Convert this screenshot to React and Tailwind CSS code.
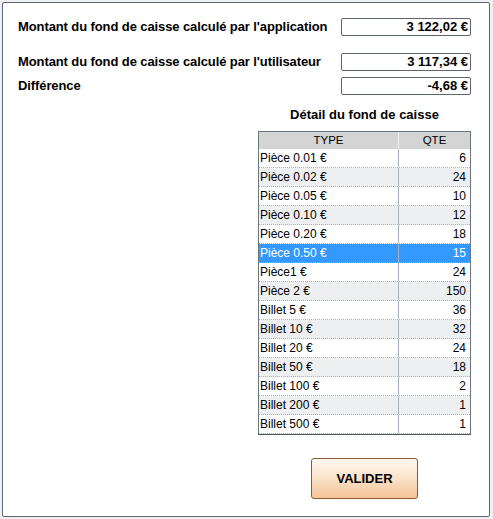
import React from "react";

const rows = [
  ["Pièce 0.01 €", "6"],
  ["Pièce 0.02 €", "24"],
  ["Pièce 0.05 €", "10"],
  ["Pièce 0.10 €", "12"],
  ["Pièce 0.20 €", "18"],
  ["Pièce 0.50 €", "15"],
  ["Pièce1 €", "24"],
  ["Pièce 2 €", "150"],
  ["Billet 5 €", "36"],
  ["Billet 10 €", "32"],
  ["Billet 20 €", "24"],
  ["Billet 50 €", "18"],
  ["Billet 100 €", "2"],
  ["Billet 200 €", "1"],
  ["Billet 500 €", "1"],
];

const SELECTED = 5;

function AmountBox({ value }) {
  return (
    <div className="w-[130px] h-[18px] border border-[#5c6470] rounded-[2px] bg-white flex items-center justify-end pr-[2px] font-bold text-[13px] leading-[16px] text-black whitespace-nowrap">
      {value}
    </div>
  );
}

export default function App() {
  return (
    <div
      className="w-[493px] h-[519px] bg-[#f0f0f0] pt-[2px] pl-[2px]"
      style={{ fontFamily: '"Liberation Sans", Arial, sans-serif' }}
    >
      <div className="w-[488px] h-[515px] border border-[#5c6478] rounded-[2px] bg-white pl-[15px] pr-[18px] pt-[15px]">
        {/* Totals */}
        <div className="flex h-[18px] items-center justify-between">
          <span className="font-bold text-[13px] leading-[18px] tracking-[-0.1px] text-black whitespace-nowrap">
            Montant du fond de caisse calculé par l'application
          </span>
          <AmountBox value="3 122,02 €" />
        </div>
        <div className="flex h-[18px] items-center justify-between mt-[17px]">
          <span className="font-bold text-[13px] leading-[18px] tracking-[-0.1px] text-black whitespace-nowrap">
            Montant du fond de caisse calculé par l'utilisateur
          </span>
          <AmountBox value="3 117,34 €" />
        </div>
        <div className="flex h-[18px] items-center justify-between mt-[6px]">
          <span className="font-bold text-[13px] leading-[18px] tracking-[-0.1px] text-black whitespace-nowrap">Différence</span>
          <AmountBox value="-4,68 €" />
        </div>

        {/* Detail */}
        <div className="flex justify-end">
          <div className="w-[213px] flex flex-col items-center">
            <div className="mt-[12px] h-[16px] font-bold text-[13px] text-black leading-[16px] whitespace-nowrap">
              Détail du fond de caisse
            </div>
            <div className="mt-[8px] w-full border border-[#6c7480] border-b-[#4c5460]">
              <div className="flex h-[17px] bg-[#d4d4d4] text-[11.5px] text-black leading-[17px]">
                <div className="w-[140px] text-center border-r border-[#f4f4f4]">TYPE</div>
                <div className="flex-1 text-center">QTE</div>
              </div>
              {rows.map(([type, qte], i) => {
                const sel = i === SELECTED;
                const bg = sel ? "bg-[#3399ff] text-white" : i % 2 === 1 ? "bg-[#eeeff1] text-black" : "bg-white text-black";
                return (
                  <div
                    key={type}
                    className={`flex h-[19px] text-[12px] leading-[18px] border-b border-dotted border-[#a8b0c0] ${bg}`}
                  >
                    <div className="w-[140px] pl-[1px] border-r border-[#a8b0b8] whitespace-nowrap">{type}</div>
                    <div className="flex-1 text-right pr-[4px]">{qte}</div>
                  </div>
                );
              })}
            </div>
            <button className="mt-[23px] w-[107px] h-[41px] rounded-[3px] border border-[#8a5a30] bg-gradient-to-b from-[#fff8f0] via-[#fbe2c8] to-[#f4c496] font-bold text-[13px] text-black">
              VALIDER
            </button>
          </div>
        </div>
      </div>
    </div>
  );
}
